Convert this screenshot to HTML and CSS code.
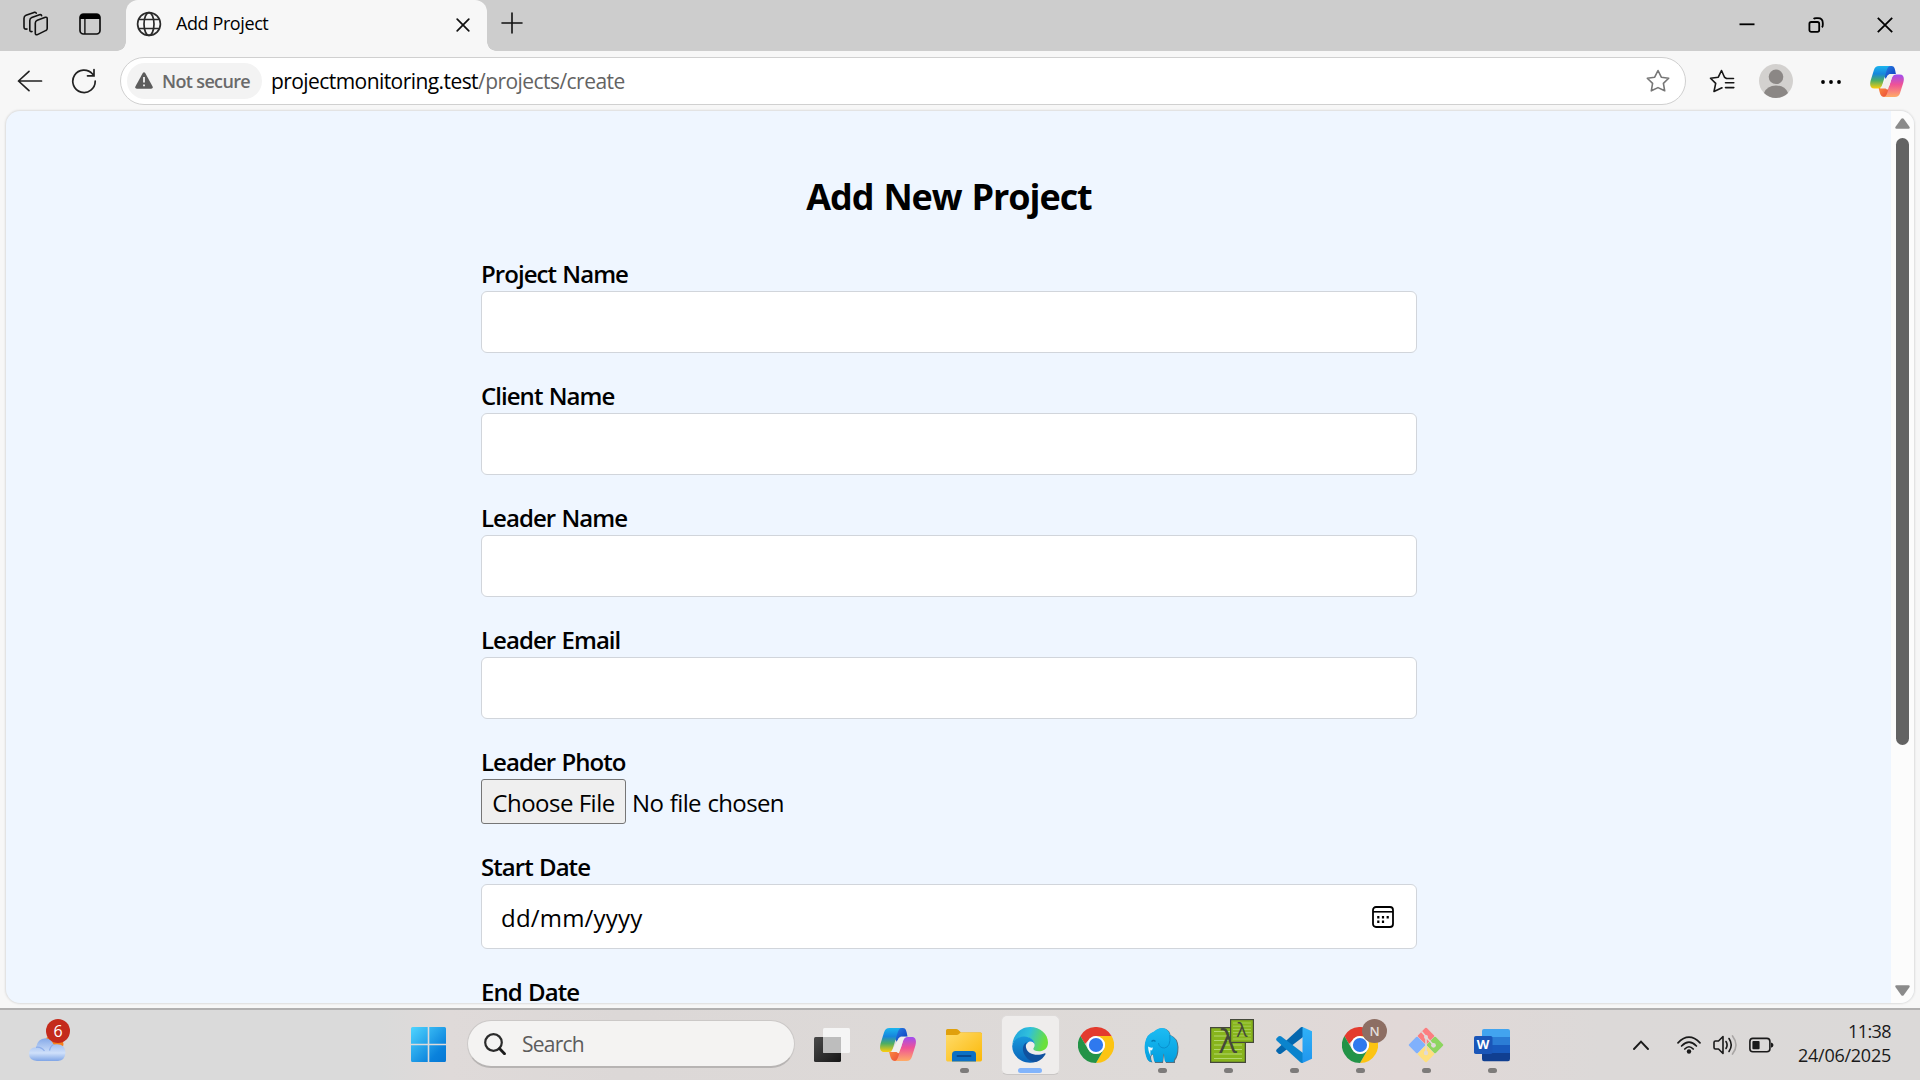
FILE: index.html
```html
<!DOCTYPE html>
<html lang="en">
<head>
<meta charset="utf-8">
<title>Add Project</title>
<link rel="stylesheet" href="styles.css">
</head>
<body>
<svg class="defs" width="0" height="0" aria-hidden="true">
  <defs>
    <linearGradient id="cpA" x1="0" y1="0" x2="0" y2="1"><stop offset="0" stop-color="#1cb5ee"/><stop offset=".35" stop-color="#1686dc"/><stop offset=".65" stop-color="#4fae62"/><stop offset="1" stop-color="#ffce0a"/></linearGradient>
    <linearGradient id="cpB" x1="0" y1="0" x2="0" y2="1"><stop offset="0" stop-color="#a04df0"/><stop offset=".45" stop-color="#ef5297"/><stop offset="1" stop-color="#ffac66"/></linearGradient>
    <linearGradient id="cpC" x1="0" y1="0" x2="1" y2="1"><stop offset="0" stop-color="#2c86e8"/><stop offset="1" stop-color="#0a38bb"/></linearGradient>
    <linearGradient id="cpD" x1="0" y1="0" x2="1" y2="1"><stop offset="0" stop-color="#ff9a3d"/><stop offset="1" stop-color="#e8403a"/></linearGradient>
    <linearGradient id="win" x1="0" y1="0" x2="1" y2="1"><stop offset="0" stop-color="#4fd5ff"/><stop offset=".75" stop-color="#0a82dc"/><stop offset="1" stop-color="#0577d4"/></linearGradient>
    <linearGradient id="fold" x1="0" y1="0" x2="1" y2="1"><stop offset="0" stop-color="#ffdc6b"/><stop offset="1" stop-color="#fbb808"/></linearGradient>
    <linearGradient id="edA" x1="0" y1="0" x2="1" y2=".25"><stop offset="0" stop-color="#1d9fdc"/><stop offset=".5" stop-color="#2fc0dc"/><stop offset="1" stop-color="#6be03c"/></linearGradient>
    <linearGradient id="edB" x1="0" y1="0" x2="0" y2="1"><stop offset="0" stop-color="#1798dc"/><stop offset="1" stop-color="#0a63b8"/></linearGradient>
    <linearGradient id="tvA" x1="0" y1="0" x2="1" y2="1"><stop offset="0" stop-color="#4a4a4a"/><stop offset="1" stop-color="#161616"/></linearGradient>
    <linearGradient id="cld" x1="0" y1="0" x2="0" y2="1"><stop offset="0" stop-color="#85a9e8"/><stop offset=".65" stop-color="#cfe0fa"/><stop offset="1" stop-color="#7fa5e6"/></linearGradient>
    <linearGradient id="vsR" x1="0" y1="0" x2="0" y2="1"><stop offset="0" stop-color="#30b2f8"/><stop offset="1" stop-color="#2196ee"/></linearGradient>
    <linearGradient id="ele" x1="0" y1="0" x2="0" y2="1"><stop offset="0" stop-color="#1dbcf3"/><stop offset="1" stop-color="#029fdf"/></linearGradient>
    <symbol id="copilot" viewBox="0 0 36 33">
      <path fill="url(#cpC)" d="M15 0H23C26 0 26.500 3 27.500 8.500H22C19 8.500 18 11 17 14L13 8Z"/>
      <path fill="url(#cpD)" d="M9 23.500H14C17 23.500 18 21 19 18L23 25L20.500 33H15C11 33 10.500 29 9 23.500Z"/>
      <path fill="url(#cpA)" d="M9.500 0H22C19.500 0 18.500 2 17.500 5L13 20C12 23 10.500 24 8 24H4.500C0 24 -.6 20 .6 15.500L4 4.500C5 1.300 6.600 0 9.500 0Z"/>
      <path fill="url(#cpB)" d="M26.500 33H14C16.500 33 17.500 31 18.500 28L23 13C24 10 25.500 9 28 9H31.500C36 9 36.600 13 35.400 17.500L32 28.500C31 31.700 29.400 33 26.500 33Z"/>
      <path fill="#f1efee" d="M18.600 10.500Q19.500 9 22 9H25.500Q24 10 23 13L19.300 24.500Q18.500 26 16.500 24H10.500Q12.500 23 13.300 20Z"/>
    </symbol>
    <symbol id="chrome" viewBox="0 0 36 36">
      <path fill="#e33b2e" d="M2.400 9A18 18 0 0 1 33.600 9H18A9 9 0 0 0 10.200 13.500L7 17Z"/>
      <path fill="#fcc413" d="M33.600 9A18 18 0 0 1 18 36L25.800 22.500A9 9 0 0 0 25.800 13.500L18 9Z"/>
      <path fill="#239347" d="M18 36A18 18 0 0 1 2.400 9L10.200 22.500A9 9 0 0 0 25.800 22.500Z"/>
      <circle cx="18" cy="18" r="9" fill="#fff"/><circle cx="18" cy="18" r="7.100" fill="#2f79ee"/>
    </symbol>
  </defs>
</svg>

<div class="tabstrip">
  <svg class="ico-workspaces" viewBox="0 0 26 26" width="26" height="26"><g fill="none" stroke="#111" stroke-width="1.600" stroke-linejoin="round" stroke-linecap="round"><path d="M14.300 9.200 22.300 6.300Q24.200 5.900 24.200 7.600V17.500Q24.200 18.900 23 19.400L14.500 23.600Q12.300 24.300 12.300 22.300V12Q12.300 10 14.300 9.200Z"/><path d="M9 20.500Q6.800 21 6.800 19V9.500Q6.800 7.400 8.800 6.600L16.500 3.700Q18.300 3.300 18.600 4.700"/><path d="M4 18Q1 18.500 1 16V7.200Q1 5 3 4.200L11 1.400Q13 1 13.200 2.200"/></g></svg>
  <svg class="ico-tabs" viewBox="0 0 22 22" width="22" height="22"><rect x="1" y="1" width="20" height="20" rx="3.500" fill="none" stroke="#111" stroke-width="1.700"/><path d="M1 6V4.200Q1 1 4.200 1H17.800Q21 1 21 4.200V6Z"/><path d="M5.900 6V21" stroke="#111" stroke-width="1.400"/></svg>
  <div class="tab">
    <svg viewBox="0 0 26 26" width="26" height="26"><g fill="none" stroke="#2b2b2b" stroke-width="1.700"><circle cx="13" cy="13" r="11.400"/><ellipse cx="13" cy="13" rx="5" ry="11.400"/><path d="M2.700 8.500H23.300M2.700 17.500H23.300"/></g></svg>
    <span class="tab-title">Add Project</span>
    <svg class="tab-close" viewBox="0 0 14 14" width="14" height="14"><path d="M1.200 1.200 12.800 12.800M12.800 1.200 1.200 12.800" stroke="#111" stroke-width="1.700" stroke-linecap="round"/></svg>
  </div>
  <svg class="ico-plus" viewBox="0 0 22 22" width="22" height="22"><path d="M11 1V21M1 11H21" stroke="#111" stroke-width="1.600" stroke-linecap="round"/></svg>
  <div class="winbtns">
    <svg viewBox="0 0 16 16" width="16" height="16"><path d="M.5 7.300H15.500" stroke="#000" stroke-width="1.800"/></svg>
    <svg viewBox="0 0 16 16" width="16" height="16"><g fill="none" stroke="#000" stroke-width="1.800"><rect x="1.400" y="5" width="9.800" height="9.800" rx="1.800"/><path d="M5.600 1.900Q6.200 1.200 8 1.200H10Q14.800 1.200 14.800 6V8Q14.800 9.600 13.900 10.400"/></g></svg>
    <svg viewBox="0 0 16 16" width="16" height="16"><path d="M.8 .8 15.200 15.200M15.200 .8 .8 15.200" stroke="#000" stroke-width="1.800"/></svg>
  </div>
</div>

<div class="toolbar">
  <svg class="ico-back" viewBox="0 0 26 22" width="26" height="22"><path d="M24.500 11H1.500M12 1.300 1.500 11 12 20.700" fill="none" stroke="#222" stroke-width="1.700" stroke-linecap="round" stroke-linejoin="round"/></svg>
  <svg class="ico-reload" viewBox="0 0 26 26" width="26" height="26"><path d="M24.200 13A11.200 11.200 0 1 1 21.500 6L22.800 7.600M23 1.500V7.800H16.500" fill="none" stroke="#222" stroke-width="1.700" stroke-linecap="round"/></svg>
  <div class="address">
    <div class="security">
      <svg viewBox="0 0 18 17" width="18" height="17"><path fill="#5c5c5c" d="M7.800 1Q9 -.6 10.200 1L17.600 14.500Q18.200 16.600 16.200 16.800H1.800Q-.2 16.600 .4 14.500Z"/><path d="M9 5V10.500M9 12.400V14.200" stroke="#f3f3f3" stroke-width="1.800"/></svg>
      <span>Not secure</span>
    </div>
    <span class="host">projectmonitoring.test</span><span class="path">/projects/create</span>
    <svg class="ico-star" viewBox="0 0 24 24" width="24" height="24"><path d="M12 1.500 15.300 8.200 22.700 9.200 17.400 14.400 18.700 21.800 12 18.600 5.300 21.800 6.600 14.400 1.300 9.200 8.700 8.200Z" fill="none" stroke="#777" stroke-width="1.600" stroke-linejoin="round"/></svg>
  </div>
  <svg class="ico-fav" viewBox="0 0 26 24" width="26" height="24"><path d="M24.500 9.500H17.500L15.500 8.300 12.500 1.500 9.300 8.200 1.500 9.200 6.700 14.400 5 22.500 13 18.800M16.500 13.800H24.800M16.500 18.600H24.800" fill="none" stroke="#161616" stroke-width="1.600" stroke-linejoin="round" stroke-linecap="round"/></svg>
  <svg class="ico-user" viewBox="0 0 34 34" width="34" height="34"><circle cx="17" cy="17" r="17" fill="#d3d1cf"/><circle cx="17" cy="12.800" r="7.300" fill="#8b8785"/><path d="M5 29Q8 21.500 17 21.500T29 29Q24 34 17 34T5 29Z" fill="#8b8785"/></svg>
  <svg class="ico-more" viewBox="0 0 20 4" width="20" height="4"><circle cx="2" cy="2" r="1.900"/><circle cx="10" cy="2" r="1.900"/><circle cx="18" cy="2" r="1.900"/></svg>
  <svg class="ico-copilot" width="34" height="31"><use href="#copilot"/></svg>
</div>

<div class="viewport">
  <main class="page">
    <h1>Add New Project</h1>
    <form class="form">
      <label>Project Name<input type="text"></label>
      <label>Client Name<input type="text"></label>
      <label>Leader Name<input type="text"></label>
      <label>Leader Email<input type="text"></label>
      <label>Leader Photo
        <span class="file"><button type="button">Choose File</button><span class="file-name">No file chosen</span></span>
      </label>
      <label>Start Date
        <span class="date"><span>dd/mm/yyyy</span>
          <svg viewBox="0 0 22 22" width="22" height="22"><rect x="1" y="1" width="20" height="20" rx="3" fill="none" stroke="#000" stroke-width="1.800"/><path d="M1 5.800H21" stroke="#000" stroke-width="1.600"/><path d="M5.200 11.200H7.400M9.900 11.200H12.100M14.600 11.200H16.800M5.200 15.800H7.400M9.900 15.800H12.100" stroke="#000" stroke-width="2.400"/></svg>
        </span>
      </label>
      <label>End Date</label>
    </form>
  </main>
  <div class="scrollbar">
    <svg viewBox="0 0 15 11" width="15" height="11"><path d="M6.300 .8Q7.500 -.5 8.700 .8L14.600 9Q15.200 10.600 13.500 10.800H1.500Q-.2 10.600 .4 9Z" fill="#8b8b8b"/></svg>
    <div class="thumb"></div>
    <svg class="down" viewBox="0 0 15 11" width="15" height="11"><path d="M6.300 10.200Q7.500 11.500 8.700 10.200L14.600 2Q15.200 .4 13.500 .2H1.500Q-.2 .4 .4 2Z" fill="#8b8b8b"/></svg>
  </div>
</div>

<div class="taskbar">
  <div class="weather">
    <svg viewBox="0 0 37 30" width="37" height="30"><circle cx="25" cy="12" r="9.500" fill="#f7811b"/><path d="M8 29Q0 28.500 0 21.500 .3 15.500 7 15.300 8.500 6.500 16.500 6.200 22 6.200 24.500 12.500 36 10.500 36.500 20.500 36 28.500 29 29Z" fill="url(#cld)"/><path d="M15.500 19Q12 14.500 7 15.300M20.500 18.500Q21.500 14 24.500 12.500" fill="none" stroke="#8eaeea" stroke-width="1.200"/></svg>
    <span class="count">6</span>
  </div>
  <svg class="start" viewBox="0 0 35 35" width="35" height="35"><path fill="url(#win)" d="M1.500 0H16.700V16.700H0V1.500Q0 0 1.500 0ZM18.300 0H33.500Q35 0 35 1.500V16.700H18.300ZM0 18.300H16.700V35H1.500Q0 35 0 33.500ZM18.300 18.300H35V33.500Q35 35 33.500 35H18.300Z"/></svg>
  <div class="search">
    <svg viewBox="0 0 22 22" width="22" height="22"><circle cx="9.500" cy="9.500" r="8.300" fill="none" stroke="#2a2a2a" stroke-width="2.200"/><path d="M15.500 15.500 20.500 20.700" stroke="#1c1c1c" stroke-width="2.800" stroke-linecap="round"/></svg>
    <span>Search</span>
  </div>
  <div class="apps">
    <div class="app"><svg viewBox="0 0 36 36" width="36" height="36"><rect x="0" y="10" width="27" height="25" rx="1.500" fill="url(#tvA)"/><rect x="9" y="1" width="27" height="25" rx="1.500" fill="#f5f5f5"/><path d="M9 10H27V26H10.500Q9 26 9 24.500Z" fill="#bdbdbd"/></svg></div>
    <div class="app"><svg width="36" height="33"><use href="#copilot"/></svg></div>
    <div class="app run"><svg viewBox="0 0 36 36" width="36" height="36"><path d="M0 3.500Q0 2 1.500 2H10Q11.500 2 12.500 3L15 5.500H34.500Q36 5.500 36 7V12H0Z" fill="#e0a00c"/><path d="M0 8H10.500Q12 8 13 7L14.500 5.500H34.500Q36 5.500 36 7V32.500Q36 34.500 34.500 34.500H1.500Q0 34.500 0 32.500Z" fill="url(#fold)"/><path d="M6 34.500V27.500Q6 24 9.500 24H26.500Q30 24 30 27.500V34.500Z" fill="#0c70c4"/><path d="M11.500 29H24.500" stroke="#08498f" stroke-width="2" stroke-linecap="round"/></svg></div>
    <div class="app active"><svg viewBox="0 0 36 36" width="36" height="36"><path d="M.3 18C1 7.500 8.500 0 18 0 28.500 0 36 7.200 36 15.500 36 21.500 31.500 24.300 27 24.300 23.500 24.300 21.300 23.200 21.300 22 21.300 21 22.600 20.300 22.600 18 22.600 14 18.500 10 12.500 10 6 10 1.500 13.500 .3 18Z" fill="url(#edA)"/><path d="M.2 19C1 13 6 9.500 12 9.500 18.500 9.500 22.500 13.500 22.600 17.500 21.500 14.500 18 13.500 15.500 16 9 22 15 33 24.500 34.700 12 39 0 30 .2 19Z" fill="url(#edB)"/><path d="M15 15C10.500 17 9.500 23 13 28.500 16.500 34 22 36 25 34.700 29 33 32 30 33.500 27.200 33.800 26.400 33 26 32.300 26.400 25 29.500 15.500 27.500 14 20.500 13.500 18 14 16 15 15Z" fill="#10529f"/></svg></div>
    <div class="app"><svg width="36" height="36"><use href="#chrome"/></svg></div>
    <div class="app run"><svg viewBox="0 0 36 36" width="36" height="36"><path d="M26.500 8Q34 11 34.500 20 34.500 30 31 33.500V36H22L20 28 19 36H11L9 27.500Q7 28 7 30 7 34 8.500 35.500 4 35.500 2.500 29 .5 24 1.500 16 3 7 11 4.500 16 -.5 22 2 26 4 26.500 8Z" fill="#35566a" opacity=".8"/><path d="M26 8Q33 11 33.500 20 33.500 29 30 32.500Q30.500 35 29 35H22Q21 35 20.500 33L20 26.500Q19 27 19 32 19 35 17.500 35H12Q10 35 9.800 33L9 27Q6 28 6 30 6.500 34 8 35 3.500 35 2 29 0 24 1 16 2.500 7 10 4.500 15 -.5 21 1.500 25 3.500 26 8Z" fill="url(#ele)"/><path d="M25.800 8Q27 20 20.500 21 15 21 14.500 16" fill="none" stroke="#0a8fcd" stroke-width="1"/><path d="M7.500 14.500Q9.500 12.500 11.500 14.500" fill="none" stroke="#067db5" stroke-width="1.200"/><path d="M4 19.500Q6 21 9 20.500L8 23.500 6.500 23Q6 27 7 29.500 4.500 26 4 19.500Z" fill="#edf7fc"/></svg></div>
    <div class="app run">
      <svg viewBox="0 0 36 36" width="36" height="36"><rect x=".6" y=".6" width="34.800" height="34.800" fill="#87b41c" stroke="#44483a" stroke-width="1.300"/><path d="M4 4.500H32M4 9H32M4 13.500H32M4 18H32M4 22.500H32M4 27H32M4 31.500H32" stroke="#b2d76c" stroke-width="1"/></svg>
      <span class="lam">λ</span>
      <span class="mini"><svg viewBox="0 0 24 24" width="24" height="24"><rect x=".6" y=".6" width="22.800" height="22.800" fill="#87b41c" stroke="#44483a" stroke-width="1.200"/><path d="M3 4H21M3 7.200H21M3 10.400H21M3 13.600H21M3 16.800H21M3 20H21" stroke="#a8d05a" stroke-width=".9"/></svg><b>λ</b></span>
    </div>
    <div class="app run"><svg viewBox="0 0 36 36" width="36" height="36"><path d="M27 0V10L5 26.800Q3.500 27.500 2.300 26.500L.6 24.800Q-.4 23.500 .8 22.300L24 1Q25.500 -.3 27 0Z" fill="#0567ae"/><path d="M27 36V26L5 9.200Q3.500 8.500 2.300 9.500L.6 11.200Q-.4 12.500 .8 13.700L24 35Q25.500 36.300 27 36Z" fill="#0b84cd"/><path d="M26.500 0 36 4.300V31.700L26.500 36Z" fill="url(#vsR)"/></svg></div>
    <div class="app run"><svg width="36" height="36"><use href="#chrome"/></svg><span class="profile">N</span></div>
    <div class="app run"><svg viewBox="0 0 36 36" width="36" height="36"><g><rect x="-6.200" y="-6.200" width="12.400" height="12.400" rx="1.200" transform="translate(18 9) rotate(45)" fill="#fb7e80"/><rect x="-6.200" y="-6.200" width="12.400" height="12.400" rx="1.200" transform="translate(9 18) rotate(45)" fill="#80b1fc"/><rect x="-6.200" y="-6.200" width="12.400" height="12.400" rx="1.200" transform="translate(27 18) rotate(45)" fill="#8dd560"/><rect x="-6.200" y="-6.200" width="12.400" height="12.400" rx="1.200" transform="translate(18 27) rotate(45)" fill="#fee07e"/></g><path d="M13.500 4.500 18 9.500V26M18 10 25.500 18" fill="none" stroke="#e0d9d8" stroke-width="1.600"/><g fill="#e0d9d8"><circle cx="18" cy="10" r="2"/><circle cx="25.500" cy="18.300" r="2.400"/><circle cx="18" cy="26" r="2.200"/></g></svg></div>
    <div class="app run"><svg viewBox="0 0 36 36" width="36" height="36"><path d="M8 4Q8 2 10 2H34Q36 2 36 4V10H8Z" fill="#42a4ef"/><path d="M8 10H36V18H8Z" fill="#2b7dd5"/><path d="M8 18H36V26H8Z" fill="#185abd"/><path d="M8 26H36V32Q36 34.300 34 34.300H10Q8 34.300 8 32Z" fill="#103f91"/><rect x="0" y="9" width="18.500" height="18" rx="1.800" fill="#1a56b8"/></svg><span class="w">W</span></div>
  </div>
  <div class="tray">
    <svg class="chev" viewBox="0 0 16 10" width="16" height="10"><path d="M1 9 8 1.700 15 9" fill="none" stroke="#1a1a1a" stroke-width="1.900" stroke-linecap="round"/></svg>
    <svg class="wifi" viewBox="0 0 24 18" width="24" height="18"><g fill="none" stroke="#1a1a1a" stroke-width="1.700" stroke-linecap="round"><path d="M1 6.800Q12 -4.500 23 6.800M4.600 10Q12 2.300 19.400 10M7.800 13Q12 8.500 16.200 13"/></g><circle cx="12" cy="15.500" r="2.200" fill="#1a1a1a"/></svg>
    <svg class="vol" viewBox="0 0 25 20" width="25" height="20"><g fill="none" stroke-width="1.600" stroke-linecap="round" stroke-linejoin="round"><path stroke="#1a1a1a" d="M10 1.500V18.500L5.500 14H2.500Q1 14 1 12.500V7.500Q1 6 2.500 6H5.500ZM13 6.500Q15.200 10 13 13.500M16 3.500Q20.500 10 16 16.500"/><path stroke="#a9a6a5" d="M19.500 .9Q26.500 10 19.500 19.100"/></g></svg>
    <svg class="bat" viewBox="0 0 25 16" width="25" height="16"><rect x=".9" y="1.400" width="20" height="13.400" rx="3" fill="none" stroke="#1a1a1a" stroke-width="1.600"/><rect x="3.400" y="4" width="7.200" height="8.200" rx="1" fill="#1a1a1a"/><path d="M22 5.500Q24.500 6 24.500 8T22 10.700Z" fill="#1a1a1a"/></svg>
    <div class="clock"><span class="time">11:38</span><span>24/06/2025</span></div>
  </div>
</div>
</body>
</html>
```
FILE: styles.css
```css
* { box-sizing: border-box; }
body {
  margin: 0;
  width: 1920px;
  height: 1080px;
  overflow: hidden;
  display: flex;
  flex-direction: column;
  background: #f7f7f7;
  color: #000;
  font-family: "Open Sans", "Noto Sans", sans-serif;
}
svg { display: block; flex: none; }
.defs { position: absolute; }

/* Tab strip */
.tabstrip {
  height: 51px;
  flex: none;
  display: flex;
  align-items: flex-start;
  background: #cdcdcd;
}
.ico-workspaces { margin: 11px 0 0 23px; }
.ico-tabs { margin: 13px 0 0 30px; }
.tab {
  position: relative;
  width: 361px;
  height: 51px;
  margin-left: 25px;
  padding: 0 17px 3px 10px;
  display: flex;
  align-items: center;
  background: #f7f7f7;
  border-radius: 12px 12px 0 0;
}
.tab::before, .tab::after {
  content: "";
  position: absolute;
  bottom: 0;
  width: 9px;
  height: 9px;
}
.tab::before { left: -9px; background: radial-gradient(circle at 0 0, #cdcdcd 8.5px, #f7f7f7 9px); }
.tab::after { right: -9px; background: radial-gradient(circle at 100% 0, #cdcdcd 8.5px, #f7f7f7 9px); }
.tab-title { margin: -2px 0 0 14px; font-size: 18px; letter-spacing: -.4px; }
.tab-close { margin: 2px 0 0 auto; }
.ico-plus { margin: 12px 0 0 14px; }
.winbtns { margin: 17px 27px 0 auto; display: flex; gap: 53px; }

/* Toolbar */
.toolbar {
  height: 59px;
  flex: none;
  display: flex;
  align-items: center;
  padding: 1px 15px 0 17px;
}
.ico-reload { margin-left: 28px; }
.address {
  width: 1566px;
  height: 48px;
  margin-left: 23px;
  padding: 0 15px 0 6px;
  display: flex;
  align-items: center;
  background: #fff;
  border: 1.500px solid #d0d0d0;
  border-radius: 24px;
  font-size: 21px;
}
.security {
  width: 135px;
  height: 36px;
  margin-right: 9px;
  padding: 0 0 1px 8px;
  display: flex;
  align-items: center;
  gap: 9px;
  background: #f3f3f3;
  border-radius: 18px;
  color: #6a6a6a;
  font-size: 18px;
  font-weight: 600;
  letter-spacing: -.65px;
  white-space: nowrap;
}
.host { letter-spacing: -.57px; }
.path { letter-spacing: -.55px; color: #636363; }
.ico-star { margin-left: auto; }
.ico-fav { margin-left: 23px; }
.ico-user { margin-left: 24px; }
.ico-more { margin: 2px 0 0 28px; }
.ico-copilot { margin-left: 29px; }

/* Page viewport */
.viewport {
  height: 892px;
  margin: 1px 6px 5px 6px;
  flex: none;
  display: flex;
  overflow: hidden;
  border-radius: 14px;
  background: #eff6ff;
  box-shadow: 0 0 2px 1px #dcdcdc;
}
.page { flex: 1; display: flex; flex-direction: column; align-items: center; padding-left: 1px; }
h1 {
  margin: 59px 0 0;
  font-size: 36px;
  line-height: 54px;
  font-weight: 700;
  letter-spacing: -1.050px;
  word-spacing: 1.500px;
}
.form {
  width: 936px;
  margin-top: 34px;
  display: flex;
  flex-direction: column;
  gap: 27px;
}
label {
  display: block;
  font-size: 24px;
  line-height: 31px;
  font-weight: 600;
  letter-spacing: -.95px;
  word-spacing: 1px;
}
input, .date, .file { margin-top: 2px; }
input, .date {
  display: flex;
  width: 100%;
  height: 62px;
  border: 1px solid #d1d5db;
  border-radius: 6px;
  background: #fff;
}
.date {
  height: 65px;
  align-items: center;
  justify-content: space-between;
  padding: 2px 22px 0 19px;
  font-weight: 400;
  letter-spacing: .2px;
}
.date svg { margin-bottom: 2px; }
.file { display: flex; align-items: center; font-weight: 400; }
.file button {
  width: 145px;
  height: 45px;
  padding: 2px 0 0;
  border: 1px solid #767676;
  border-radius: 3px;
  background: #efefef;
  font: 24px "Open Sans", sans-serif;
  letter-spacing: -.5px;
  word-spacing: 0;
  color: #000;
}
.file-name { margin: 2px 0 0 6px; letter-spacing: -.65px; }
.scrollbar {
  width: 23px;
  padding: 7px 0;
  display: flex;
  flex-direction: column;
  align-items: center;
  background: #fcfcfc;
}
.thumb { width: 13px; height: 607px; margin-top: 9px; border-radius: 7px; background: #636363; }
.down { margin-top: auto; }

/* Taskbar */
.taskbar {
  height: 72px;
  flex: none;
  display: flex;
  align-items: center;
  padding-bottom: 1px;
  border-top: 2px solid #b1b0b0;
  background: linear-gradient(90deg, #dadada 0, #dadada 380px, #dfdad9 450px, #dcd8d7 620px, #dedad8 1200px, #e1d8d7 1400px, #dcd9d8 1600px, #dbd9d8 100%);
}
.weather { position: relative; margin: 4px 0 0 29px; }
.count {
  position: absolute;
  left: 17px;
  top: -13px;
  width: 24px;
  height: 24px;
  border-radius: 50%;
  background: #c42b1c;
  color: #fff;
  font-size: 16px;
  line-height: 24px;
  text-align: center;
}
.start { margin: 0 21px 0 345px; }
.search {
  width: 328px;
  height: 48px;
  margin-top: -1px;
  padding-left: 16px;
  display: flex;
  align-items: center;
  gap: 16px;
  background: #f4f3f2;
  border: 1.500px solid #cbc8c7;
  border-bottom: 2px solid #b7b4b3;
  border-radius: 24px;
  color: #5c5c5c;
  font-size: 21px;
  letter-spacing: -.75px;
}
.apps { display: flex; margin-left: 4px; height: 69px; }
.app {
  position: relative;
  width: 66px;
  height: 69px;
  display: flex;
  align-items: center;
  justify-content: center;
}
.app > svg { position: relative; z-index: 1; }
.run::after, .active::after {
  content: "";
  position: absolute;
  z-index: 1;
  left: 29px;
  bottom: 6px;
  width: 9px;
  height: 5px;
  border-radius: 2.5px;
  background: #7d7b7a;
}
.active::after { left: 21px; width: 24px; background: #82b4fb; }
.active::before {
  content: "";
  position: absolute;
  left: 4px;
  top: 5px;
  width: 57px;
  height: 58px;
  border: 1px solid #dedbda;
  border-bottom-color: #c9c6c5;
  border-radius: 6px;
  background: #efedec;
}
.lam, .mini, .profile, .w { position: absolute; z-index: 2; }
.lam {
  left: 15px;
  top: 13px;
  width: 36px;
  font: 500 33px/36px "Open Sans", sans-serif;
  text-align: center;
  color: #44483a;
}
.mini { left: 35px; top: 9px; width: 24px; height: 24px; }
.mini b {
  position: absolute;
  inset: 0;
  font: 20px/22px "Open Sans", sans-serif;
  text-align: center;
  color: #44483a;
}
.profile {
  left: 35px;
  top: 9px;
  width: 25px;
  height: 24px;
  border-radius: 50%;
  background: #8d6e63;
  color: #e3dedc;
  font: 600 13px/24px "Open Sans", sans-serif;
  text-align: center;
}
.w {
  left: 15px;
  top: 25px;
  width: 18px;
  font: 700 13px/18px "Open Sans", sans-serif;
  text-align: center;
  color: #fff;
}
.tray { margin: 0 29px 0 auto; display: flex; align-items: center; }
.wifi { margin-left: 28px; }
.vol { margin-left: 12px; }
.bat { margin-left: 11px; }
.clock {
  width: 105px;
  margin: -3px 0 0 12px;
  display: flex;
  flex-direction: column;
  align-items: flex-end;
  font-size: 18px;
  line-height: 24px;
  letter-spacing: -.25px;
  color: #1a1a1a;
}
.time { letter-spacing: -.6px; }
```
